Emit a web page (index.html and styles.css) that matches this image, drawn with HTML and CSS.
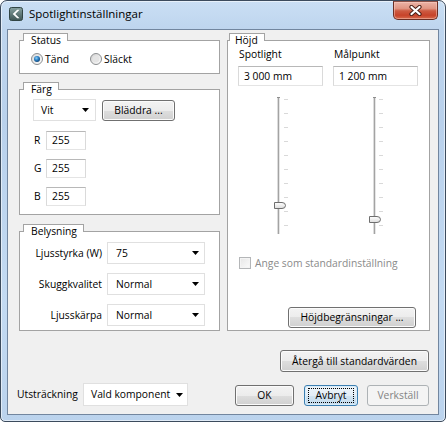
FILE: index.html
```html
<!DOCTYPE html>
<html lang="sv">
<head>
<meta charset="utf-8">
<title>Spotlightinställningar</title>
<link rel="stylesheet" href="styles.css">
</head>
<body>
<div class="window">
  <div class="titlebar">
    <svg class="appicon" width="14" height="14" viewBox="0 0 14 14">
      <defs>
        <linearGradient id="ig" x1="0" y1="0" x2="0" y2="1">
          <stop offset="0" stop-color="#86a09f"/>
          <stop offset="1" stop-color="#3e5554"/>
        </linearGradient>
      </defs>
      <rect x="0.5" y="0.5" width="13" height="13" rx="2" fill="url(#ig)" stroke="#314544"/>
      <polygon points="8.2,2.8 3.7,7 8.2,11.2 10.6,11.2 6.3,7 10.6,2.8" fill="#ffffff"/>
    </svg>
    <span class="title">Spotlightinställningar</span>
    <div class="close">
      <svg width="13" height="11" viewBox="0 0 13 11">
        <path d="M2.5 2 L10.5 9 M10.5 2 L2.5 9" stroke="#4a1f16" stroke-width="4.2" stroke-linecap="round"/>
        <path d="M2.5 2 L10.5 9 M10.5 2 L2.5 9" stroke="#ffffff" stroke-width="2.3" stroke-linecap="round"/>
      </svg>
    </div>
  </div>
  <div class="client">
    <div class="columns">
      <div class="col col-left">
        <section class="group">
          <div class="legend">Status</div>
          <div class="gbody status-body">
            <span class="radio">
              <svg width="12" height="12" viewBox="0 0 12 12">
                <defs>
                  <linearGradient id="rg1" x1="0" y1="0" x2="1" y2="1">
                    <stop offset="0" stop-color="#d6d6d6"/>
                    <stop offset="1" stop-color="#ffffff"/>
                  </linearGradient>
                  <radialGradient id="dot" cx="0.4" cy="0.35" r="0.7">
                    <stop offset="0" stop-color="#8fd0f5"/>
                    <stop offset="0.5" stop-color="#2a7fc4"/>
                    <stop offset="1" stop-color="#0f3f6e"/>
                  </radialGradient>
                </defs>
                <circle cx="6" cy="6" r="5.5" fill="url(#rg1)" stroke="#8b8e90"/>
                <circle cx="6" cy="6" r="3" fill="url(#dot)"/>
              </svg>
              Tänd
            </span>
            <span class="radio radio-2">
              <svg width="12" height="12" viewBox="0 0 12 12">
                <defs>
                  <linearGradient id="rg2" x1="0" y1="0" x2="1" y2="1">
                    <stop offset="0" stop-color="#cfcfcf"/>
                    <stop offset="1" stop-color="#ffffff"/>
                  </linearGradient>
                </defs>
                <circle cx="6" cy="6" r="5.5" fill="url(#rg2)" stroke="#8b8e90"/>
                <circle cx="6" cy="6" r="3.2" fill="#e4e4e4"/>
              </svg>
              Släckt
            </span>
          </div>
        </section>

        <section class="group group-farg">
          <div class="legend">Färg</div>
          <div class="gbody farg-body">
            <div class="farg-top">
              <div class="combo combo-vit">
                <span class="combo-text">Vit</span>
                <svg class="arrow" width="7" height="4" viewBox="0 0 7 4"><polygon points="0,0 7,0 3.5,4" fill="#000"/></svg>
              </div>
              <div class="btn btn-bladdra">Bläddra ...</div>
            </div>
            <div class="rgb-row rgb-first"><span class="rgb-label">R</span><div class="textbox tb-rgb">255</div></div>
            <div class="rgb-row"><span class="rgb-label">G</span><div class="textbox tb-rgb">255</div></div>
            <div class="rgb-row"><span class="rgb-label">B</span><div class="textbox tb-rgb">255</div></div>
          </div>
        </section>

        <section class="group group-bel">
          <div class="legend">Belysning</div>
          <div class="gbody bel-body">
            <div class="bel-row">
              <span class="bel-label">Ljusstyrka (W)</span>
              <div class="combo combo-bel">
                <span class="combo-text">75</span>
                <svg class="arrow" width="7" height="4" viewBox="0 0 7 4"><polygon points="0,0 7,0 3.5,4" fill="#000"/></svg>
              </div>
            </div>
            <div class="bel-row">
              <span class="bel-label">Skuggkvalitet</span>
              <div class="combo combo-bel">
                <span class="combo-text">Normal</span>
                <svg class="arrow" width="7" height="4" viewBox="0 0 7 4"><polygon points="0,0 7,0 3.5,4" fill="#000"/></svg>
              </div>
            </div>
            <div class="bel-row">
              <span class="bel-label">Ljusskärpa</span>
              <div class="combo combo-bel">
                <span class="combo-text">Normal</span>
                <svg class="arrow" width="7" height="4" viewBox="0 0 7 4"><polygon points="0,0 7,0 3.5,4" fill="#000"/></svg>
              </div>
            </div>
          </div>
        </section>
      </div>

      <div class="col col-right">
        <section class="group">
          <div class="legend legend-hojd">Höjd</div>
          <div class="gbody hojd-body">
            <div class="hojd-cols">
              <div class="hojd-col">
                <div class="hojd-label">Spotlight</div>
                <div class="textbox tb-hojd">3 000 mm</div>
                <svg class="slider" width="85" height="137" viewBox="0 0 85 137">
                  <defs>
                    <linearGradient id="tg1" x1="0" y1="0" x2="0" y2="1">
                      <stop offset="0" stop-color="#ffffff"/>
                      <stop offset="1" stop-color="#dcdcdc"/>
                    </linearGradient>
                  </defs>
                  <rect x="39" y="0" width="1" height="137" fill="#dcdcdc"/>
                  <rect x="40" y="0" width="1" height="137" fill="#a3a3a3"/>
                  <rect x="41" y="0" width="1" height="137" fill="#e6e6e6"/>
                  <rect x="39" y="0" width="3" height="1" fill="#8e8e8e"/>
                  <g stroke="#d9d9d9" stroke-width="1">
                    <line x1="46" y1="2.5" x2="50" y2="2.5"/>
                    <line x1="46" y1="16.5" x2="50" y2="16.5"/>
                    <line x1="46" y1="30.5" x2="50" y2="30.5"/>
                    <line x1="46" y1="44.5" x2="50" y2="44.5"/>
                    <line x1="46" y1="58.5" x2="50" y2="58.5"/>
                    <line x1="46" y1="72.5" x2="50" y2="72.5"/>
                    <line x1="46" y1="86.5" x2="50" y2="86.5"/>
                    <line x1="46" y1="100.5" x2="50" y2="100.5"/>
                    <line x1="46" y1="114.5" x2="50" y2="114.5"/>
                    <line x1="46" y1="128.5" x2="50" y2="128.5"/>
                  </g>
                  <path d="M36.5 105.5 H44 Q47.5 105.5 47.5 108.5 Q47.5 111.5 44 111.5 H36.5 Z" fill="url(#tg1)" stroke="#6e6e6e"/>
                </svg>
              </div>
              <div class="hojd-col">
                <div class="hojd-label">Målpunkt</div>
                <div class="textbox tb-hojd">1 200 mm</div>
                <svg class="slider" width="85" height="137" viewBox="0 0 85 137">
                  <defs>
                    <linearGradient id="tg2" x1="0" y1="0" x2="0" y2="1">
                      <stop offset="0" stop-color="#ffffff"/>
                      <stop offset="1" stop-color="#dcdcdc"/>
                    </linearGradient>
                  </defs>
                  <rect x="40" y="0" width="1" height="137" fill="#dcdcdc"/>
                  <rect x="41" y="0" width="1" height="137" fill="#a3a3a3"/>
                  <rect x="42" y="0" width="1" height="137" fill="#e6e6e6"/>
                  <rect x="40" y="0" width="3" height="1" fill="#8e8e8e"/>
                  <g stroke="#d9d9d9" stroke-width="1">
                    <line x1="46" y1="2.5" x2="50" y2="2.5"/>
                    <line x1="46" y1="16.5" x2="50" y2="16.5"/>
                    <line x1="46" y1="30.5" x2="50" y2="30.5"/>
                    <line x1="46" y1="44.5" x2="50" y2="44.5"/>
                    <line x1="46" y1="58.5" x2="50" y2="58.5"/>
                    <line x1="46" y1="72.5" x2="50" y2="72.5"/>
                    <line x1="46" y1="86.5" x2="50" y2="86.5"/>
                    <line x1="46" y1="100.5" x2="50" y2="100.5"/>
                    <line x1="46" y1="114.5" x2="50" y2="114.5"/>
                    <line x1="46" y1="128.5" x2="50" y2="128.5"/>
                  </g>
                  <path d="M36.5 119.5 H44 Q47.5 119.5 47.5 122.5 Q47.5 125.5 44 125.5 H36.5 Z" fill="url(#tg2)" stroke="#6e6e6e"/>
                </svg>
              </div>
            </div>
            <div class="check-row">
              <span class="checkbox"></span>
              <span class="disabled-text">Ange som standardinställning</span>
            </div>
            <div class="btn btn-hojdbegr">Höjdbegränsningar ...</div>
          </div>
        </section>
      </div>
    </div>

    <div class="reset-row">
      <div class="btn btn-reset">Återgå till standardvärden</div>
    </div>

    <div class="bottom-row">
      <span class="ut-label">Utsträckning</span>
      <div class="combo combo-ut">
        <span class="combo-text">Vald komponent</span>
        <svg class="arrow" width="7" height="4" viewBox="0 0 7 4"><polygon points="0,0 7,0 3.5,4" fill="#000"/></svg>
      </div>
      <div class="dialog-buttons">
        <div class="btn btn-ok">OK</div>
        <div class="btn btn-default btn-avbryt"><span class="focus">Avbryt</span></div>
        <div class="btn btn-disabled btn-verk">Verkställ</div>
      </div>
    </div>
  </div>
</div>
</body>
</html>
```
FILE: styles.css
```css
* { box-sizing: border-box; }

html, body {
  margin: 0;
  padding: 0;
}

body {
  width: 446px;
  height: 422px;
  overflow: hidden;
  background: #ffffff;
  font-family: "Open Sans", "Noto Sans", "DejaVu Sans", sans-serif;
  font-size: 10.3px;
  line-height: 13px;
  color: #000000;
}

/* ---------- window frame ---------- */
.window {
  width: 446px;
  height: 422px;
  display: flex;
  flex-direction: column;
  border: 1px solid #3c4b5d;
  border-radius: 7px 7px 5px 5px;
  background: linear-gradient(180deg, #cadff4 0px, #bed5ee 28px, #b9d1ec 120px, #c3daf2 300px, #bbd3ed 422px);
  box-shadow: inset 0 0 0 1px rgba(255, 255, 255, 0.55);
  overflow: hidden;
}

.titlebar {
  height: 28px;
  flex: none;
  display: flex;
  align-items: flex-start;
  padding-left: 8px;
}

.appicon {
  flex: none;
  margin-top: 6px;
}

.title {
  margin-left: 6px;
  margin-top: 5px;
  font-size: 11.5px;
  line-height: 16px;
  color: #000000;
}

.close {
  margin-left: auto;
  margin-right: 7px;
  width: 45px;
  height: 19px;
  flex: none;
  border: 1px solid #6a2e24;
  border-top-color: #8c5248;
  border-radius: 0 0 5px 5px;
  background: linear-gradient(180deg, #ebb3a6 0%, #e09583 38%, #cd5b42 52%, #c7432a 78%, #d66a4c 100%);
  box-shadow: inset 0 0 0 1px rgba(255, 214, 204, 0.45);
  display: flex;
  align-items: center;
  justify-content: center;
}

/* ---------- client area ---------- */
.client {
  flex: 1;
  margin: 0 6px 6px 6px;
  background: #f0f0f0;
  border: 1px solid #72869f;
  padding: 3px 8px 0 9px;
  display: flex;
  flex-direction: column;
}

.columns {
  flex: none;
  display: flex;
  gap: 7px;
  margin-left: 2px;
  height: 298px;
}

.col {
  display: flex;
  flex-direction: column;
}

.col-left { width: 201px; }
.col-right { width: 203px; }

/* ---------- group boxes ---------- */
.group {
  display: flex;
  flex-direction: column;
}

.group-farg { margin-top: 8px; }
.group-bel { margin-top: 9px; }

.legend {
  align-self: flex-start;
  position: relative;
  z-index: 1;
  height: 8px;
  margin: 0 0 -1px 4px;
  padding: 0 6px 0 7px;
  border: 1px solid #a3a3a3;
  border-bottom: 0;
  background: #ffffff;
  line-height: 13px;
  white-space: nowrap;
}

.legend-hojd {
  margin-left: 2px;
  padding: 0 6px 0 5px;
}

.gbody {
  border: 1px solid #a3a3a3;
  background: #ffffff;
}

/* status */
.status-body {
  height: 34px;
  display: flex;
  align-items: center;
  padding: 4px 0 0 11px;
}

.radio {
  display: flex;
  align-items: center;
  gap: 2px;
}

.radio svg { flex: none; }

.radio-2 { margin-left: 21px; }

/* färg */
.farg-body {
  height: 126px;
  padding: 9px 0 0 13px;
  display: flex;
  flex-direction: column;
}

.farg-top {
  display: flex;
  align-items: center;
  height: 22px;
}

.rgb-row {
  display: flex;
  align-items: center;
  margin-top: 9px;
  padding-left: 1px;
}

.rgb-first { margin-top: 10px; }

.rgb-label {
  width: 12px;
}

.tb-rgb {
  width: 40px;
  height: 19px;
}

/* belysning */
.bel-body {
  height: 100px;
  padding-top: 10px;
  display: flex;
  flex-direction: column;
  gap: 9px;
}

.bel-row {
  display: flex;
  align-items: center;
}

.bel-label {
  width: 82px;
  text-align: right;
  white-space: nowrap;
}

/* höjd */
.hojd-body {
  height: 291px;
  display: flex;
  flex-direction: column;
  padding: 6px 0 0 10px;
}

.hojd-cols {
  display: flex;
  gap: 10px;
}

.hojd-col {
  width: 85px;
  display: flex;
  flex-direction: column;
}

.hojd-label {
  line-height: 14px;
  padding-left: 1px;
}

.tb-hojd {
  margin-top: 5px;
  height: 20px;
  padding-left: 4px;
}

.slider {
  display: block;
  margin-top: 11px;
}

.check-row {
  display: flex;
  align-items: center;
  margin-top: 23px;
  padding-left: 1px;
  height: 12px;
}

.checkbox {
  width: 12px;
  height: 12px;
  flex: none;
  border: 1px solid #b4b6b8;
  background: linear-gradient(135deg, #e6e6e6, #fbfbfb);
  box-shadow: inset 0 0 0 1px #f4f4f4;
}

.disabled-text {
  margin-left: 4px;
  color: #8a8a8a;
  white-space: nowrap;
}

.btn-hojdbegr {
  margin-top: auto;
  margin-bottom: 2px;
  margin-right: 13px;
  align-self: flex-end;
  width: 128px;
}

/* ---------- controls ---------- */
.textbox {
  background: #ffffff;
  border: 1px solid;
  border-color: #b8b8b8 #dadada #e4e4e4 #dadada;
  display: flex;
  align-items: center;
  padding-left: 5px;
  white-space: nowrap;
}

.combo {
  background: #ffffff;
  border: 1px solid #e0e0e0;
  display: flex;
  align-items: center;
  padding-left: 7px;
  white-space: nowrap;
}

.combo .arrow {
  margin-left: auto;
  flex: none;
}

.combo-vit {
  width: 63px;
  height: 22px;
}

.combo-vit .arrow { margin-right: 6px; }

.combo-bel {
  margin-left: 5px;
  width: 98px;
  height: 22px;
  padding-left: 8px;
}

.combo-bel .arrow { margin-right: 5px; }

.combo-ut {
  width: 105px;
  height: 23px;
}

.combo-ut .arrow { margin-right: 4px; }

.btn {
  height: 21px;
  border: 1px solid #707070;
  border-radius: 3px;
  background: linear-gradient(180deg, #f3f3f3 0%, #ececec 50%, #dedede 50%, #d0d0d0 100%);
  box-shadow: inset 0 0 0 1px #fbfbfb;
  display: flex;
  align-items: center;
  justify-content: center;
  white-space: nowrap;
  flex: none;
}

.btn-bladdra {
  margin-left: 6px;
  width: 73px;
}

.btn-default {
  border-color: #3c7fb1;
  background: linear-gradient(180deg, #eef5fa 0%, #e3eef7 50%, #d2e4f1 50%, #c4dbed 100%);
  box-shadow: inset 0 0 0 1px #d9ecf9;
}

.btn-disabled {
  border-color: #adb2b5;
  background: #f4f4f4;
  box-shadow: none;
  color: #838383;
}

.focus {
  flex: 1;
  align-self: stretch;
  margin: 2px 3px;
  border: 1px dotted #000000;
  display: flex;
  align-items: center;
  justify-content: center;
}

/* ---------- bottom area ---------- */
.reset-row {
  flex: none;
  display: flex;
  justify-content: flex-end;
  margin-top: 19px;
  padding-right: 1px;
}

.btn-reset {
  width: 149px;
  height: 22px;
}

.bottom-row {
  flex: none;
  display: flex;
  align-items: flex-end;
  margin-top: 11px;
  height: 23px;
}

.ut-label {
  align-self: center;
  width: 66px;
  white-space: nowrap;
}

.dialog-buttons {
  margin-left: auto;
  display: flex;
  padding-right: 1px;
}

.btn-ok { width: 59px; }
.btn-avbryt { width: 54px; margin-left: 10px; }
.btn-verk { width: 62px; margin-left: 9px; }
```
